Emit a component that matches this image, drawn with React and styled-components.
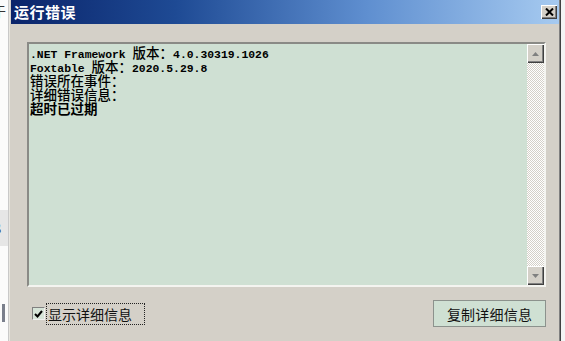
import React from "react";
import styled, { createGlobalStyle } from "styled-components";

const Global = createGlobalStyle`
  html, body { margin: 0; padding: 0; }
  body {
    width: 565px; height: 341px; overflow: hidden;
    background: #f4f4f4;
    font-family: "Noto Sans CJK SC", "Liberation Sans", sans-serif;
  }
`;

const Screen = styled.div`
  display: flex;
  width: 565px;
  height: 341px;
  overflow: hidden;
`;

const BehindStrip = styled.div`
  width: 8px;
  flex: none;
  display: flex;
  flex-direction: column;
  background: #fbfbfb;
  border-right: 1px solid #c9c9c9;
  overflow: hidden;
`;

const BehindText = styled.div`
  height: ${p => p.$h}px;
  margin-top: ${p => p.$mt || 0}px;
  background: ${p => p.$bg || "transparent"};
  font-size: 14px;
  line-height: ${p => p.$h}px;
  color: #333;
  white-space: nowrap;
  text-indent: -8px;
`;

const BehindMark = styled.div`
  width: 3px;
  height: 18px;
  margin: 58px 0 0 2px;
  background: #7a7f8c;
`;

const Window = styled.div`
  width: 548px;
  flex: none;
  display: flex;
  flex-direction: column;
  background: #d4d0c8;
  padding: 0 2px;
  box-shadow: inset 1px 0 0 #e8e6e0, inset -1px 0 0 #404040, inset -2px 0 0 #808080;
`;

const TitleBar = styled.div`
  height: 23px;
  flex: none;
  display: flex;
  align-items: center;
  justify-content: space-between;
  padding: 0 2px 1px 3px;
  background: linear-gradient(to right, #0a246a 0%, #1e4a94 30%, #5f8fd0 65%, #a6caf0 100%);
`;

const Title = styled.div`
  color: #fff;
  font-weight: 700;
  font-size: 15px;
  letter-spacing: 0.5px;
  line-height: 20px;
`;

const CloseButton = styled.div`
  width: 16px;
  height: 14px;
  margin-top: 1px;
  display: flex;
  align-items: center;
  justify-content: center;
  background: #d4d0c8;
  box-shadow: inset 1px 1px 0 #fff, inset -1px -1px 0 #404040, inset -2px -2px 0 #808080;
`;

const Body = styled.div`
  flex: 1;
  display: flex;
  flex-direction: column;
  padding: 18px 13px 0 16px;
`;

const TextBox = styled.div`
  height: 245px;
  display: flex;
  background: #cfe0d3;
  border: 2px solid;
  border-color: #8a8a86 #f4f4f0 #f4f4f0 #8a8a86;
  box-sizing: border-box;
`;

const TextContent = styled.div`
  flex: 1;
  padding: 1px 1px;
  color: #000;
`;

const Line = styled.div`
  height: 14px;
  line-height: 14px;
  font-size: 13.5px;
  font-weight: ${p => (p.$bold ? 700 : 500)};
  white-space: nowrap;
`;

const Mono = styled.span`
  font-family: "Liberation Mono", monospace;
  font-size: 11.4px;
  font-weight: 700;
`;

const ScrollBar = styled.div`
  width: 17px;
  display: flex;
  flex-direction: column;
  background: repeating-conic-gradient(#d4d0c8 0 25%, #ffffff 0 50%) 0 0 / 2px 2px;
`;

const ArrowButton = styled.div`
  height: 19px;
  display: flex;
  align-items: center;
  justify-content: center;
  background: #d4d0c8;
  box-shadow: inset 1px 1px 0 #fff, inset -1px -1px 0 #404040, inset -2px -2px 0 #808080;
`;

const Track = styled.div`
  flex: 1;
`;

const BottomRow = styled.div`
  display: flex;
  align-items: center;
  justify-content: space-between;
  margin-top: 13px;
  height: 27px;
  padding-left: 5px;
`;

const CheckGroup = styled.div`
  display: flex;
  align-items: center;
  gap: 1px;
`;

const CheckBox = styled.div`
  width: 13px;
  height: 13px;
  box-sizing: border-box;
  background: #d6e4d8;
  border: 1px solid;
  border-color: #808080 #f0f0f0 #f0f0f0 #808080;
  display: flex;
  align-items: center;
  justify-content: center;
`;

const FocusLabel = styled.div`
  width: 96px;
  height: 20px;
  border: 1px dotted #222;
  font-size: 14px;
  line-height: 20px;
  color: #111;
  padding-left: 1px;
  white-space: nowrap;
`;

const Button = styled.div`
  width: 113px;
  height: 27px;
  box-sizing: border-box;
  display: flex;
  align-items: center;
  justify-content: center;
  background: #cfe0d3;
  border: 1px solid #8c928d;
  font-size: 14px;
  color: #111;
  letter-spacing: 0.2px;
`;

export default function App() {
  return (
    <>
      <Global />
      <Screen>
        <BehindStrip>
          <BehindText $h={22}>于</BehindText>
          <BehindText $h={36} $mt={188} $bg="#e6e6e6">B</BehindText>
          <BehindMark />
        </BehindStrip>
        <Window>
          <TitleBar>
            <Title>运行错误</Title>
            <CloseButton>
              <svg width="9" height="8" viewBox="0 0 9 8">
                <path d="M1 0.5 L8 7.5 M8 0.5 L1 7.5" stroke="#000" strokeWidth="2" />
              </svg>
            </CloseButton>
          </TitleBar>
          <Body>
            <TextBox>
              <TextContent>
                <Line><Mono>.NET Framework </Mono>版本：<Mono>4.0.30319.1026</Mono></Line>
                <Line><Mono>Foxtable </Mono>版本：<Mono>2020.5.29.8</Mono></Line>
                <Line>错误所在事件：</Line>
                <Line>详细错误信息：</Line>
                <Line $bold>超时已过期</Line>
              </TextContent>
              <ScrollBar>
                <ArrowButton>
                  <svg width="7" height="4" viewBox="0 0 7 4"><path d="M3.5 0 L7 4 L0 4 Z" fill="#808080" /></svg>
                </ArrowButton>
                <Track />
                <ArrowButton>
                  <svg width="7" height="4" viewBox="0 0 7 4"><path d="M0 0 L7 0 L3.5 4 Z" fill="#808080" /></svg>
                </ArrowButton>
              </ScrollBar>
            </TextBox>
            <BottomRow>
              <CheckGroup>
                <CheckBox>
                  <svg width="9" height="8" viewBox="0 0 9 8">
                    <path d="M1 4 L3.5 6.5 L8 1" stroke="#000" strokeWidth="2" fill="none" />
                  </svg>
                </CheckBox>
                <FocusLabel>显示详细信息</FocusLabel>
              </CheckGroup>
              <Button>复制详细信息</Button>
            </BottomRow>
          </Body>
        </Window>
      </Screen>
    </>
  );
}
